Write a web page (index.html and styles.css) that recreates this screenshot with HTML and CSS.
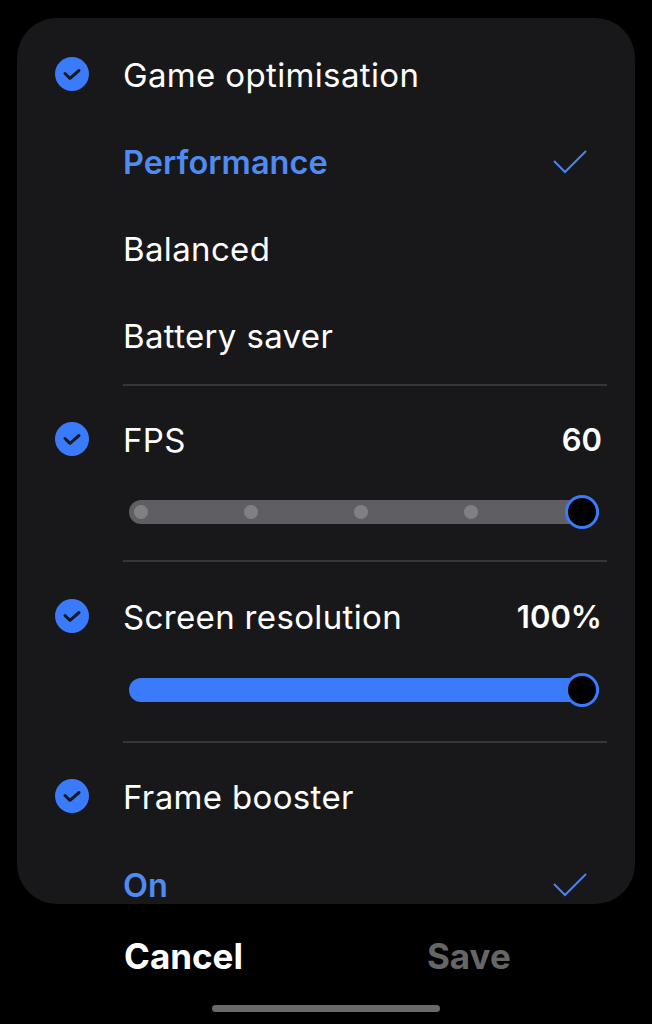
FILE: index.html
```html
<!DOCTYPE html>
<html lang="en">
<head>
<meta charset="utf-8">
<title>Game optimisation</title>
<link rel="stylesheet" href="styles.css">
</head>
<body>
<main class="panel">
  <section class="group group-first">
    <div class="row row-title">
      <svg class="badge" viewBox="0 0 34 34"><circle cx="17" cy="17" r="17" fill="#3a7bfb"/><path d="M10 16.5l5 4.8 9-7.8" fill="none" stroke="#16191f" stroke-width="3" stroke-linecap="round" stroke-linejoin="round"/></svg>
      <span class="label">Game optimisation</span>
    </div>
    <div class="row row-option">
      <span class="label selected">Performance</span>
      <svg class="tick" viewBox="0 0 36 26"><path d="M2 12l11 11L34 2" fill="none" stroke="#4a84ec" stroke-width="2"/></svg>
    </div>
    <div class="row row-option"><span class="label">Balanced</span></div>
    <div class="row row-option"><span class="label">Battery saver</span></div>
  </section>
  <hr class="divider divider-a">
  <section class="group group-fps">
    <div class="row row-value">
      <svg class="badge" viewBox="0 0 34 34"><circle cx="17" cy="17" r="17" fill="#3a7bfb"/><path d="M10 16.5l5 4.8 9-7.8" fill="none" stroke="#16191f" stroke-width="3" stroke-linecap="round" stroke-linejoin="round"/></svg>
      <span class="label">FPS</span>
      <span class="value">60</span>
    </div>
    <div class="slider slider-grey">
      <span class="stops"><i></i><i></i><i></i><i></i></span>
      <span class="thumb"></span>
    </div>
  </section>
  <hr class="divider divider-b">
  <section class="group group-res">
    <div class="row row-value">
      <svg class="badge" viewBox="0 0 34 34"><circle cx="17" cy="17" r="17" fill="#3a7bfb"/><path d="M10 16.5l5 4.8 9-7.8" fill="none" stroke="#16191f" stroke-width="3" stroke-linecap="round" stroke-linejoin="round"/></svg>
      <span class="label">Screen resolution</span>
      <span class="value">100%</span>
    </div>
    <div class="slider slider-blue">
      <span class="thumb"></span>
    </div>
  </section>
  <hr class="divider divider-c">
  <section class="group group-frame">
    <div class="row row-title">
      <svg class="badge" viewBox="0 0 34 34"><circle cx="17" cy="17" r="17" fill="#3a7bfb"/><path d="M10 16.5l5 4.8 9-7.8" fill="none" stroke="#16191f" stroke-width="3" stroke-linecap="round" stroke-linejoin="round"/></svg>
      <span class="label">Frame booster</span>
    </div>
    <div class="row row-option row-on">
      <span class="label selected">On</span>
      <svg class="tick" viewBox="0 0 36 26"><path d="M2 12l11 11L34 2" fill="none" stroke="#4a84ec" stroke-width="2"/></svg>
    </div>
  </section>
</main>
<footer class="actions">
  <span class="action action-cancel">Cancel</span>
  <span class="action action-save">Save</span>
</footer>
<div class="home-wrap"><span class="home"></span></div>
</body>
</html>
```

FILE: styles.css
```css
* { box-sizing: border-box; }
html, body { margin: 0; padding: 0; background: #000; }
body {
  width: 652px;
  height: 1024px;
  padding-top: 18px;
  overflow: hidden;
  font-family: Inter, "Noto Sans", sans-serif;
  color: #fff;
}
.panel {
  width: 618px;
  height: 886px;
  margin-left: 17px;
  background: #18181b;
  border-radius: 40px;
  overflow: hidden;
}
.group-first { padding-top: 13px; }
.row {
  display: flex;
  align-items: center;
  height: 87px;
  padding-right: 35px;
}
.row-title, .row-value { padding-left: 38px; }
.row-option { padding-left: 106px; justify-content: space-between; }
.row-on { margin-top: 1px; }
.badge { width: 34px; height: 34px; margin-right: 34px; margin-top: -2px; flex: none; }
.label { font-size: 33px; font-weight: 400; letter-spacing: 0.35px; white-space: nowrap; }
.selected { color: #4f8bf0; font-size: 32.5px; font-weight: 600; letter-spacing: 0.05px; padding-top: 2px; }
.tick { width: 36px; height: 26px; margin-right: 12px; }
.value { margin-left: auto; font-size: 31px; font-weight: 600; }
.row-value { padding-right: 33px; }
.divider { height: 2px; margin: 0 28px 0 106px; border: 0; background: #36363a; }
.divider-a { margin-top: 5px; }
.group-fps { padding-top: 10px; }
.group-res { padding-top: 11px; }
.slider {
  position: relative;
  height: 24px;
  width: 470px;
  margin-left: 112px;
  border-radius: 12px;
}
.slider-grey { background: #5f5f63; margin-top: 17px; }
.slider-blue { background: #3a7bfb; margin-top: 18px; }
.divider-b { margin-top: 36px; }
.divider-c { margin-top: 39px; }
.stops {
  display: flex;
  justify-content: space-between;
  width: 344px;
  padding-top: 5px;
  margin-left: 5px;
}
.stops i { width: 14px; height: 14px; border-radius: 50%; background: #808084; }
.thumb {
  position: absolute;
  right: 0;
  top: -5px;
  width: 34px;
  height: 34px;
  border-radius: 50%;
  background: #000;
  border: 3.5px solid #3a7bfb;
}
.group-frame { padding-top: 10px; }
.actions {
  display: flex;
  margin-top: 23px;
  height: 58px;
  align-items: center;
}
.action { font-size: 35px; font-weight: 700; }
.action-cancel { margin-left: 124px; }
.action-save { margin-left: 184px; color: #666; }
.home-wrap { display: flex; justify-content: center; margin-top: 20px; }
.home { width: 228px; height: 7px; border-radius: 4px; background: #6a6a6a; }
```
